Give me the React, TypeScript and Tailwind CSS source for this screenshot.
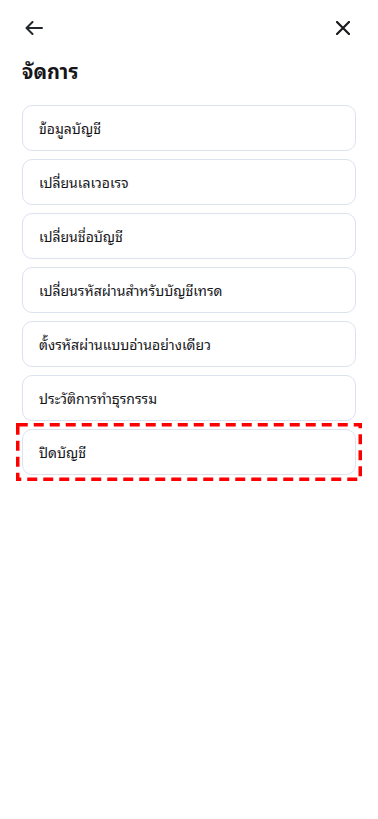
const items = [
  'ข้อมูลบัญชี',
  'เปลี่ยนเลเวอเรจ',
  'เปลี่ยนชื่อบัญชี',
  'เปลี่ยนรหัสผ่านสำหรับบัญชีเทรด',
  'ตั้งรหัสผ่านแบบอ่านอย่างเดียว',
  'ประวัติการทำธุรกรรม',
]

function MenuCard({ label }: { label: string }) {
  return (
    <div className="flex h-[46px] items-center rounded-[10px] border border-[#dce2ee] bg-white pb-[2px] pl-[16px] text-[14px] text-[#16161a]">
      {label}
    </div>
  )
}

export default function App() {
  return (
    <div
      className="min-h-[819px] w-full bg-white"
      style={{ fontFamily: '"Noto Sans Thai Looped", "Noto Serif Thai", Tahoma, "Noto Sans Thai", sans-serif' }}
    >
      <div className="flex h-[14px] items-center justify-between pl-[25px] pr-[28px] mt-[21px]">
        <svg width="18" height="14" viewBox="0 0 18 14" fill="none" stroke="#23262d" strokeWidth="2" strokeLinecap="round" strokeLinejoin="round">
          <path d="M17 7H1.5M7.5 1L1.5 7l6 6" />
        </svg>
        <svg width="14" height="14" viewBox="0 0 14 14" fill="none" stroke="#1b1b1f" strokeWidth="2.2" strokeLinecap="round">
          <path d="M1 1l12 12M13 1L1 13" />
        </svg>
      </div>

      <h1 className="mt-[21px] px-[22px] text-[20px] font-bold leading-[28px] text-[#16161a]">จัดการ</h1>

      <div className="mt-[21px] flex flex-col gap-[8px] px-[22px]">
        {items.map(label => (
          <MenuCard key={label} label={label} />
        ))}
        <div className="relative">
          <MenuCard label="ปิดบัญชี" />
          {/* highlight frame */}
          <svg className="pointer-events-none absolute -left-[6px] -top-[6px] h-[58px] w-[calc(100%+12px)] overflow-visible">
            <rect x="1.75" y="1.75" width="calc(100% - 3.5px)" height="54.5" fill="none" stroke="#ff0000" strokeWidth="3.5" strokeDasharray="10 6" />
          </svg>
        </div>
      </div>
    </div>
  )
}
